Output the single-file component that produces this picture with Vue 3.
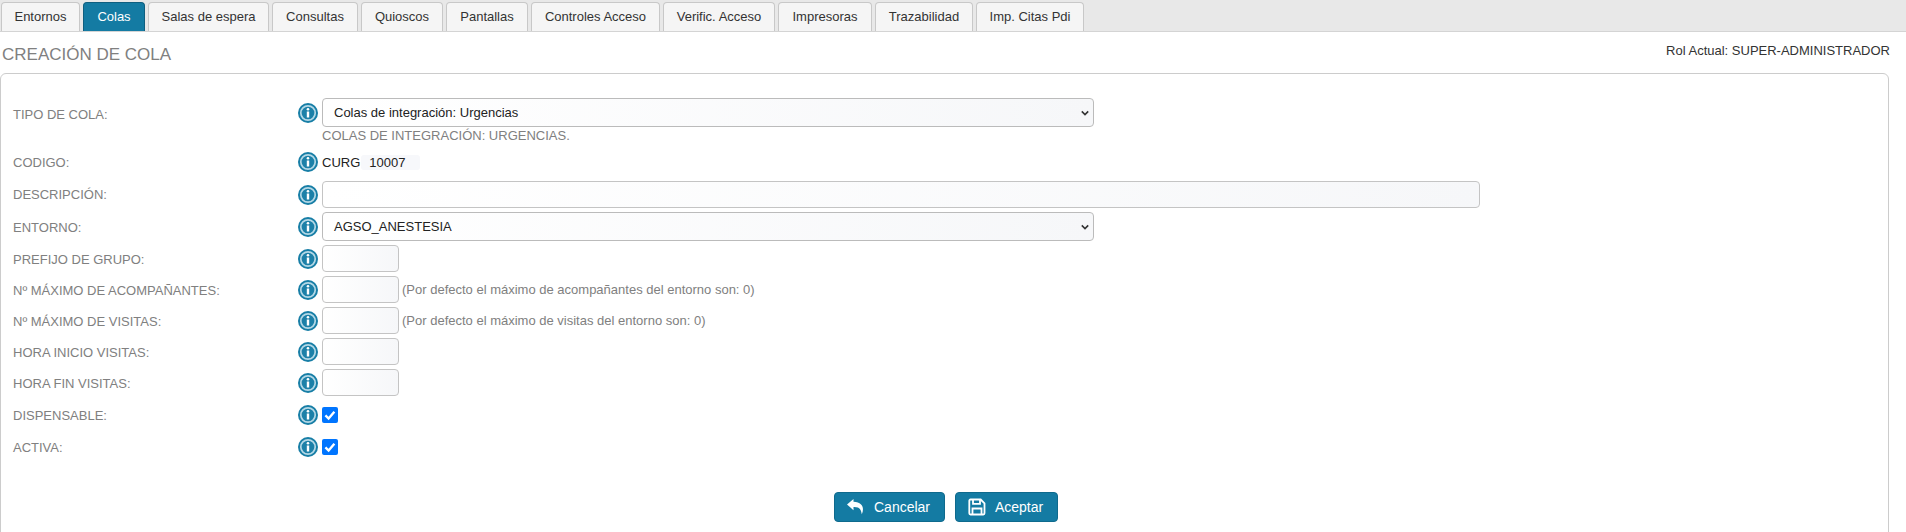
<script setup>
const tabs = [
  { name: 'Entornos', width: 79 },
  { name: 'Colas', width: 62 },
  { name: 'Salas de espera', width: 121 },
  { name: 'Consultas', width: 86 },
  { name: 'Quioscos', width: 82 },
  { name: 'Pantallas', width: 82 },
  { name: 'Controles Acceso', width: 129 },
  { name: 'Verific. Acceso', width: 112 },
  { name: 'Impresoras', width: 94 },
  { name: 'Trazabilidad', width: 98 },
  { name: 'Imp. Citas Pdi', width: 108 }
]
</script>

<template>
  <div class="page">
    <nav class="tabs">
      <a v-for="t in tabs" :key="t.name" class="tab" :class="{ active: t.name === 'Colas' }" :style="{ width: t.width + 'px' }">{{ t.name }}</a>
    </nav>
    <header class="head">
      <h1>CREACIÓN DE COLA</h1>
      <span class="rol">Rol Actual: SUPER-ADMINISTRADOR</span>
    </header>
    <section class="card">
      <div class="row r-tipo">
        <label>TIPO DE COLA:</label>
        <svg class="info" viewBox="0 0 20 20"><use href="#i" /></svg>
        <div class="stack">
          <div class="sel wide">Colas de integración: Urgencias<svg class="chev" viewBox="0 0 10 6"><path d="M1 1l4 4 4-4" /></svg></div>
          <div class="note">COLAS DE INTEGRACIÓN: URGENCIAS.</div>
        </div>
      </div>
      <div class="row r-cod">
        <label>CODIGO:</label>
        <svg class="info" viewBox="0 0 20 20"><use href="#i" /></svg>
        <span class="cod">CURG</span><span class="codval">10007</span>
      </div>
      <div class="row r-desc">
        <label>DESCRIPCIÓN:</label>
        <svg class="info" viewBox="0 0 20 20"><use href="#i" /></svg>
        <div class="inp full"></div>
      </div>
      <div class="row r-ent">
        <label>ENTORNO:</label>
        <svg class="info" viewBox="0 0 20 20"><use href="#i" /></svg>
        <div class="sel wide">AGSO_ANESTESIA<svg class="chev" viewBox="0 0 10 6"><path d="M1 1l4 4 4-4" /></svg></div>
      </div>
      <div class="row r-in">
        <label>PREFIJO DE GRUPO:</label>
        <svg class="info" viewBox="0 0 20 20"><use href="#i" /></svg>
        <div class="inp small"></div>
      </div>
      <div class="row r-in">
        <label>Nº MÁXIMO DE ACOMPAÑANTES:</label>
        <svg class="info" viewBox="0 0 20 20"><use href="#i" /></svg>
        <div class="inp small"></div>
        <span class="hint">(Por defecto el máximo de acompañantes del entorno son: 0)</span>
      </div>
      <div class="row r-in">
        <label>Nº MÁXIMO DE VISITAS:</label>
        <svg class="info" viewBox="0 0 20 20"><use href="#i" /></svg>
        <div class="inp small"></div>
        <span class="hint">(Por defecto el máximo de visitas del entorno son: 0)</span>
      </div>
      <div class="row r-in">
        <label>HORA INICIO VISITAS:</label>
        <svg class="info" viewBox="0 0 20 20"><use href="#i" /></svg>
        <div class="inp small"></div>
      </div>
      <div class="row r-in">
        <label>HORA FIN VISITAS:</label>
        <svg class="info" viewBox="0 0 20 20"><use href="#i" /></svg>
        <div class="inp small"></div>
      </div>
      <div class="row r-chk first">
        <label>DISPENSABLE:</label>
        <svg class="info" viewBox="0 0 20 20"><use href="#i" /></svg>
        <span class="chk"><svg viewBox="0 0 15 15"><path d="M3.2 7.8l3 3 5.4-6.4" /></svg></span>
      </div>
      <div class="row r-chk">
        <label>ACTIVA:</label>
        <svg class="info" viewBox="0 0 20 20"><use href="#i" /></svg>
        <span class="chk"><svg viewBox="0 0 15 15"><path d="M3.2 7.8l3 3 5.4-6.4" /></svg></span>
      </div>
      <div class="actions">
        <button class="btn b1">
          <svg class="bi" viewBox="0 0 20 18"><path d="M7.5 1L1 6.6l6.5 5.6V8.900c4.600-.1 7.300.8 8.300 7.300 2.600-5.700 1.300-12-8.300-12.400z" /></svg>
          Cancelar
        </button>
        <button class="btn b2">
          <svg class="bi" viewBox="0 0 18 18"><path class="save" d="M2.500 1.500h10.200l3.800 3.800v10a1.200 1.200 0 0 1-1.200 1.200H2.500a1.200 1.200 0 0 1-1.200-1.200V2.700a1.200 1.200 0 0 1 1.200-1.200z" /><path class="save" d="M5 1.800v4h7v-4" /><path class="save" d="M4.500 16.300v-5.800h9v5.800" /></svg>
          Aceptar
        </button>
      </div>
    </section>
    <svg class="defs" width="0" height="0">
      <symbol id="i" viewBox="0 0 20 20">
        <circle cx="10" cy="10" r="10" fill="#177ea6" />
        <circle cx="10" cy="10" r="7.200" fill="#1c80a8" stroke="#b4d8e6" stroke-width="1.700" />
        <circle cx="10" cy="6.300" r="1.300" fill="#fff" />
        <rect x="8.800" y="8.500" width="2.400" height="6" fill="#fff" />
      </symbol>
    </svg>
  </div>
</template>

<style scoped>
.page { width: 1906px; height: 532px; overflow: hidden; background: #fff; font-family: "Liberation Sans", Arial, sans-serif; font-size: 13px; color: #333; }
.tabs { display: flex; height: 32px; box-sizing: border-box; padding: 2px 0 0 1px; gap: 3px; background: #e8e8e8; border-bottom: 1px solid #d4d4d4; }
.tab { height: 29px; box-sizing: border-box; text-align: center; line-height: 28px; background: #f5f5f5; border: 1px solid #c8c8c8; border-bottom: 0; border-radius: 4px 4px 0 0; color: #333; font-size: 13px; white-space: nowrap; }
.tab.active { background: #147ba3; border-color: #0f5f80; color: #fff; }
.head { display: flex; justify-content: space-between; height: 41px; padding: 0 16px 0 2px; box-sizing: border-box; }
.head h1 { margin: 13px 0 0; font-size: 17px; line-height: 19px; font-weight: 400; color: #808080; }
.rol { margin-top: 11px; line-height: 16px; font-size: 13px; color: #333; }
.card { width: 1889px; height: 480px; box-sizing: border-box; padding: 24px 0 0 12px; border: 1px solid #ccc; border-radius: 6px; }
.row { display: flex; align-items: center; }
.row label { width: 285px; flex: none; padding-top: 1px; color: #808080; font-size: 13px; }
.info { width: 20px; height: 20px; flex: none; margin-right: 4px; }
.r-tipo { align-items: flex-start; height: 50px; }
.r-tipo label { margin-top: 8px; }
.r-tipo .info { margin-top: 5px; }
.stack { display: flex; flex-direction: column; }
.sel { position: relative; height: 29px; box-sizing: border-box; padding-left: 11px; line-height: 27px; border: 1px solid #bbb; border-radius: 4px; background: linear-gradient(90deg, #fff, #f6f7f9); color: #222; }
.wide { width: 772px; }
.chev { position: absolute; right: 4px; top: 11px; width: 8px; height: 6px; fill: none; stroke: #333; stroke-width: 2; }
.note { color: #808080; line-height: 15px; margin-top: 1px; }
.r-cod { height: 22px; margin-top: 3px; }
.r-cod label { padding-top: 0; }
.cod { color: #222; }
.codval { margin-left: 1px; width: 59px; height: 15px; padding-left: 8px; line-height: 15px; box-sizing: border-box; border-radius: 3px; background: #f7f8fb; color: #222; }
.r-desc { margin-top: 8px; }
.r-desc label { padding-top: 0; }
.inp { height: 27px; box-sizing: border-box; border: 1px solid #c4c4c4; border-radius: 4px; background: linear-gradient(90deg, #fff, #f6f7f9); }
.full { width: 1158px; }
.small { width: 77px; }
.r-ent { margin-top: 4px; }
.r-in { margin-top: 4px; height: 27px; }
.hint { margin-left: 3px; color: #808080; }
.r-chk { height: 16px; margin-top: 16px; }
.r-chk.first { margin-top: 11px; }
.r-chk label { padding-top: 0; }
.chk { width: 16px; height: 16px; border-radius: 2px; background: #0075ff; display: block; }
.chk svg { width: 16px; height: 16px; display: block; fill: none; stroke: #fff; stroke-width: 2.200; }
.actions { display: flex; justify-content: flex-start; gap: 10px; margin: 37px 0 0 821px; }
.btn { display: flex; align-items: center; justify-content: center; height: 30px; box-sizing: border-box; border: 1px solid #0f6a8d; border-radius: 4px; background: #147ba3; color: #fff; font: 14px "Liberation Sans", Arial, sans-serif; padding: 0; }
.b1 { width: 111px; }
.b2 { width: 103px; }
.bi { width: 20px; height: 18px; margin-right: 8px; margin-left: -3px; fill: #fff; flex: none; }
.save { fill: none; stroke: #fff; stroke-width: 1.800; }
.defs { position: absolute; }
</style>
